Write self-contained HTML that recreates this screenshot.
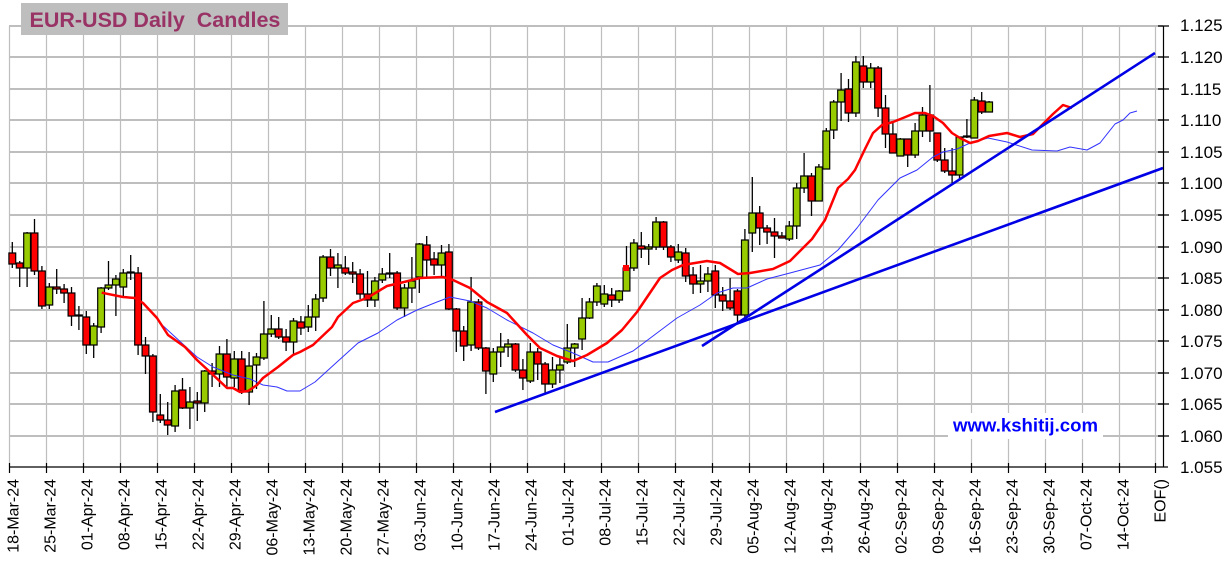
<!DOCTYPE html>
<html><head><meta charset="utf-8"><title>EUR-USD Daily Candles</title>
<style>html,body{margin:0;padding:0;background:#fff;width:1228px;height:576px;overflow:hidden}svg{display:block}text{font-family:"Liberation Sans",Arial,sans-serif}</style>
</head><body>
<svg width="1228" height="576" viewBox="0 0 1228 576" xmlns="http://www.w3.org/2000/svg">
<path fill="none" stroke="#bebebe" stroke-width="1.2" d="M9.5 26V467M46.5 26V467M83.5 26V467M120.5 26V467M157.5 26V467M194.5 26V467M231.5 26V467M268.5 26V467M305.5 26V467M342.5 26V467M379.5 26V467M416.5 26V467M453.5 26V467M490.5 26V467M527.5 26V467M564.5 26V467M601.5 26V467M638.5 26V467M675.5 26V467M712.5 26V467M749.5 26V467M786.5 26V467M823.5 26V467M860.5 26V467M897.5 26V467M934.5 26V467M971.5 26V467M1008.5 26V467M1045.5 26V467M1082.5 26V467M1119.5 26V467M1155.5 26V467"/>
<path fill="none" stroke="#bebebe" stroke-width="2" d="M9 26H1163M9 57H1163M9 89H1163M9 120H1163M9 152H1163M9 183H1163M9 215H1163M9 247H1163M9 278H1163M9 310H1163M9 341H1163M9 373H1163M9 404H1163M9 436H1163"/>
<rect x="948" y="413" width="155" height="26" fill="#fff"/>
<rect x="21" y="3" width="267" height="32" fill="#bebebe"/>
<text x="29.5" y="27" font-size="21.5" font-weight="bold" fill="#993366" xml:space="preserve" style="white-space:pre">EUR-USD Daily  Candles</text>
<path fill="none" stroke="#000" stroke-width="1.3" d="M12.3 242V268M19.7 261V287M27.1 232V287M34.5 219V275M41.9 266V309M49.3 283V309M56.7 269V294M64.1 284V303M71.5 287V326M78.9 306V330M86.3 311V354M93.7 323V358M101.1 287V333M108.5 261V290M115.9 275V316M123.3 269V297M130.7 255V280M138.1 267V355M145.5 337V374M152.9 354V422M160.3 394V423M167.7 402V435M175.1 385V432M182.5 378V409M189.9 387V429M197.3 392V421M204.7 370V412M212.1 363V387M219.5 346V387M226.9 339V388M234.3 351V387M241.7 351V394M249.1 352V405M256.5 353V389M263.9 301V360M271.3 315V337M278.7 317V339M286.1 329V351M293.5 318V355M300.9 316V335M308.3 305V332M315.7 294V331M323.1 255V302M330.5 249V276M337.9 253V288M345.3 256V275M352.7 262V283M360.1 269V299M367.5 271V307M374.9 277V307M382.3 268V283M389.7 253V278M397.1 271V310M404.5 284V317M411.9 257V303M419.3 243V293M426.7 236V277M434.1 252V275M441.5 245V277M448.9 244V310M456.3 308V352M463.7 326V361M471.1 277V351M478.5 299V350M485.9 347V394M493.3 348V382M500.7 333V367M508.1 339V357M515.5 343V372M522.9 359V390M530.3 343V383M537.7 348V380M545.1 362V393M552.5 357V388M559.9 356V383M567.3 324V364M574.7 343V367M582.1 298V350M589.5 298V319M596.9 283V306M604.3 285V307M611.7 288V307M619.1 290V303M626.5 246V291M633.9 239V271M641.3 232V258M648.7 244V265M656.1 217V250M663.5 221V250M670.9 245V262M678.3 244V263M685.7 248V282M693.1 267V294M700.5 265V293M707.9 267V292M715.3 265V308M722.7 287V311M730.1 278V310M737.5 289V323M744.9 229V318M752.3 177V252M759.7 206V245M767.1 225V244M774.5 218V258M781.9 232V238M789.3 221V241M796.7 183V239M804.1 153V193M811.5 173V216M818.9 164V201M826.3 128V169M833.7 100V139M841.1 73V121M848.5 79V122M855.9 56V117M863.3 56V88M870.7 63V88M878.1 66V117M885.5 95V148M892.9 123V153M900.3 138V156M907.7 139V167M915.1 123V158M922.5 107V137M929.9 85V142M937.3 133V162M944.7 148V173M952.1 148V183M959.5 137V180M966.9 119V138M974.3 97V138M981.7 92V114M989.1 101V112"/>
<path fill="#99cc00" stroke="#000" stroke-width="1.2" d="M23.7 233h6.8V268h-6.8zM45.9 287h6.8V305h-6.8zM90.3 326h6.8V345h-6.8zM97.7 288h6.8V327h-6.8zM105.1 285h6.8V288h-6.8zM112.5 279h6.8V285h-6.8zM119.9 273h6.8V287h-6.8zM171.7 391h6.8V426h-6.8zM186.5 402h6.8V408h-6.8zM201.3 371h6.8V403h-6.8zM216.1 354h6.8V374h-6.8zM230.9 359h6.8V378h-6.8zM245.7 366h6.8V392h-6.8zM253.1 357h6.8V365h-6.8zM260.5 334h6.8V358h-6.8zM267.9 329h6.8V334h-6.8zM290.1 321h6.8V342h-6.8zM304.9 317h6.8V327h-6.8zM312.3 299h6.8V317h-6.8zM319.7 257h6.8V298h-6.8zM334.5 265h6.8V268h-6.8zM371.5 281h6.8V300h-6.8zM378.9 274h6.8V280h-6.8zM401.1 288h6.8V308h-6.8zM408.5 281h6.8V288h-6.8zM415.9 244h6.8V277h-6.8zM438.1 253h6.8V265h-6.8zM467.7 302h6.8V345h-6.8zM489.9 352h6.8V374h-6.8zM497.3 347h6.8V352h-6.8zM504.7 344h6.8V347h-6.8zM526.9 352h6.8V381h-6.8zM549.1 370h6.8V384h-6.8zM556.5 365h6.8V370h-6.8zM563.9 348h6.8V362h-6.8zM571.3 344h6.8V348h-6.8zM578.7 318h6.8V339h-6.8zM586.1 302h6.8V318h-6.8zM593.5 286h6.8V302h-6.8zM600.9 294h6.8V304h-6.8zM615.7 291h6.8V300h-6.8zM623.1 268h6.8V291h-6.8zM630.5 243h6.8V268h-6.8zM645.3 247h6.8V249h-6.8zM652.7 222h6.8V247h-6.8zM674.9 252h6.8V260h-6.8zM697.1 281h6.8V284h-6.8zM704.5 274h6.8V281h-6.8zM741.5 240h6.8V315h-6.8zM748.9 213h6.8V233h-6.8zM785.9 226h6.8V239h-6.8zM793.3 188h6.8V226h-6.8zM800.7 176h6.8V188h-6.8zM815.5 167h6.8V201h-6.8zM822.9 131h6.8V169h-6.8zM830.3 102h6.8V130h-6.8zM837.7 90h6.8V102h-6.8zM852.5 62h6.8V113h-6.8zM867.3 68h6.8V82h-6.8zM896.9 139h6.8V156h-6.8zM911.7 131h6.8V155h-6.8zM919.1 115h6.8V131h-6.8zM956.1 137h6.8V175h-6.8zM970.9 100h6.8V138h-6.8zM985.7 102h6.8V112h-6.8z"/>
<path fill="#ff0000" stroke="#000" stroke-width="1.2" d="M8.9 253h6.8V264h-6.8zM16.3 263h6.8V268h-6.8zM31.1 233h6.8V271h-6.8zM38.5 271h6.8V306h-6.8zM53.3 287h6.8V289h-6.8zM60.7 289h6.8V293h-6.8zM68.1 293h6.8V316h-6.8zM75.5 315h6.8V316h-6.8zM82.9 317h6.8V345h-6.8zM127.3 272h6.8V273h-6.8zM134.7 273h6.8V345h-6.8zM142.1 345h6.8V356h-6.8zM149.5 356h6.8V412h-6.8zM156.9 415h6.8V420h-6.8zM164.3 420h6.8V425h-6.8zM179.1 390h6.8V408h-6.8zM193.9 401h6.8V403h-6.8zM208.7 371h6.8V374h-6.8zM223.5 354h6.8V377h-6.8zM238.3 359h6.8V391h-6.8zM275.3 329h6.8V337h-6.8zM282.7 337h6.8V342h-6.8zM297.5 322h6.8V328h-6.8zM327.1 257h6.8V268h-6.8zM341.9 268h6.8V273h-6.8zM349.3 272h6.8V274h-6.8zM356.7 274h6.8V294h-6.8zM364.1 294h6.8V300h-6.8zM386.3 273h6.8V274h-6.8zM393.7 273h6.8V308h-6.8zM423.3 245h6.8V260h-6.8zM430.7 259h6.8V265h-6.8zM445.5 252h6.8V309h-6.8zM452.9 309h6.8V331h-6.8zM460.3 331h6.8V346h-6.8zM475.1 302h6.8V348h-6.8zM482.5 348h6.8V371h-6.8zM512.1 344h6.8V370h-6.8zM519.5 370h6.8V378h-6.8zM534.3 352h6.8V364h-6.8zM541.7 364h6.8V384h-6.8zM608.3 295h6.8V300h-6.8zM637.9 246h6.8V249h-6.8zM660.1 222h6.8V247h-6.8zM667.5 247h6.8V257h-6.8zM682.3 253h6.8V276h-6.8zM689.7 275h6.8V284h-6.8zM711.9 271h6.8V295h-6.8zM719.3 295h6.8V301h-6.8zM726.7 301h6.8V308h-6.8zM734.1 291h6.8V315h-6.8zM756.3 213h6.8V228h-6.8zM763.7 228h6.8V232h-6.8zM771.1 232h6.8V236h-6.8zM778.5 236h6.8V238h-6.8zM808.1 176h6.8V201h-6.8zM845.1 89h6.8V113h-6.8zM859.9 66h6.8V82h-6.8zM874.7 68h6.8V108h-6.8zM882.1 108h6.8V134h-6.8zM889.5 134h6.8V153h-6.8zM904.3 139h6.8V155h-6.8zM926.5 115h6.8V131h-6.8zM933.9 133h6.8V160h-6.8zM941.3 160h6.8V171h-6.8zM948.7 171h6.8V175h-6.8zM963.5 136h6.8V137h-6.8zM978.3 101h6.8V112h-6.8z"/>
<rect x="623" y="265" width="6" height="6" fill="#ff0000"/>
<path fill="none" stroke="#3333ff" stroke-width="1" stroke-linejoin="round" d="M160 323L173 335L197 357L213 367L233 375L250 379L263 385L277 387L287 391L300 391L315 382L337 362L358 343L378 333L397 320L417 310L437 302L450 297L470 301L487 308L507 320L533 333L553 345L573 353L593 362L608 362L633 351L657 333L677 318L700 305L717 293L733 288L747 288L767 279L790 273L820 265L838 250L857 228L878 200L900 178L917 170L933 157L943 152L957 149L970 143L988 138L1007 142L1032 150L1057 151L1070 147L1087 150L1100 143L1115 124L1123 120L1130 113L1137 111"/>
<path fill="none" stroke="#ff0000" stroke-width="2.5" stroke-linejoin="round" d="M101.7 292.7L123 297L135 298L143 303L157 318L168 335L185 347L197 360L210 372L227 388L233 388L240 392L248 391L257 385L263 378L278 367L293 355L300 352L313 345L332 327L338 317L353 303L367 298L387 286L400 283L420 278L443 277L453 280L470 288L487 302L507 313L527 335L540 348L557 356L573 361L587 355L607 343L622 330L637 312L660 278L672 270L683 265L707 261L720 263L738 274L750 273L773 269L790 261L812 239L825 220L838 188L848 179L855 170L865 149L873 133L882 125L893 122L903 118L915 113L925 113L933 116L943 123L952 133L960 138L970 143L978 141L989 136L1007 133L1020 137L1033 134L1047 120L1053 114L1063 105L1072 108"/>
<path fill="none" stroke="#0000e6" stroke-width="2.6" d="M495 412L1163 168M702 346L1155 53"/>
<path fill="none" stroke="#000" stroke-width="1.2" d="M1163.5 26V467M9 467H1168M9.5 463V473M46.5 463V473M83.5 463V473M120.5 463V473M157.5 463V473M194.5 463V473M231.5 463V473M268.5 463V473M305.5 463V473M342.5 463V473M379.5 463V473M416.5 463V473M453.5 463V473M490.5 463V473M527.5 463V473M564.5 463V473M601.5 463V473M638.5 463V473M675.5 463V473M712.5 463V473M749.5 463V473M786.5 463V473M823.5 463V473M860.5 463V473M897.5 463V473M934.5 463V473M971.5 463V473M1008.5 463V473M1045.5 463V473M1082.5 463V473M1119.5 463V473M1155.5 463V473M1158 26H1169M1158 57H1169M1158 89H1169M1158 120H1169M1158 152H1169M1158 183H1169M1158 215H1169M1158 247H1169M1158 278H1169M1158 310H1169M1158 341H1169M1158 373H1169M1158 404H1169M1158 436H1169"/>
<g font-size="17" fill="#000">
<text x="1180" y="31">1.125</text><text x="1180" y="63">1.120</text><text x="1180" y="95">1.115</text><text x="1180" y="126">1.110</text><text x="1180" y="158">1.105</text><text x="1180" y="189">1.100</text><text x="1180" y="221">1.095</text><text x="1180" y="253">1.090</text><text x="1180" y="284">1.085</text><text x="1180" y="316">1.080</text><text x="1180" y="347">1.075</text><text x="1180" y="379">1.070</text><text x="1180" y="410">1.065</text><text x="1180" y="442">1.060</text><text x="1180" y="473">1.055</text>
</g>
<g font-size="16" fill="#000" text-anchor="end">
<text x="18.3" y="479" transform="rotate(-90 18.3 479)">18-Mar-24</text>
<text x="55.3" y="479" transform="rotate(-90 55.3 479)">25-Mar-24</text>
<text x="92.3" y="479" transform="rotate(-90 92.3 479)">01-Apr-24</text>
<text x="129.3" y="479" transform="rotate(-90 129.3 479)">08-Apr-24</text>
<text x="166.3" y="479" transform="rotate(-90 166.3 479)">15-Apr-24</text>
<text x="203.3" y="479" transform="rotate(-90 203.3 479)">22-Apr-24</text>
<text x="240.3" y="479" transform="rotate(-90 240.3 479)">29-Apr-24</text>
<text x="277.3" y="479" transform="rotate(-90 277.3 479)">06-May-24</text>
<text x="314.3" y="479" transform="rotate(-90 314.3 479)">13-May-24</text>
<text x="351.3" y="479" transform="rotate(-90 351.3 479)">20-May-24</text>
<text x="388.3" y="479" transform="rotate(-90 388.3 479)">27-May-24</text>
<text x="425.3" y="479" transform="rotate(-90 425.3 479)">03-Jun-24</text>
<text x="462.3" y="479" transform="rotate(-90 462.3 479)">10-Jun-24</text>
<text x="499.3" y="479" transform="rotate(-90 499.3 479)">17-Jun-24</text>
<text x="536.3" y="479" transform="rotate(-90 536.3 479)">24-Jun-24</text>
<text x="573.3" y="479" transform="rotate(-90 573.3 479)">01-Jul-24</text>
<text x="610.3" y="479" transform="rotate(-90 610.3 479)">08-Jul-24</text>
<text x="647.3" y="479" transform="rotate(-90 647.3 479)">15-Jul-24</text>
<text x="684.3" y="479" transform="rotate(-90 684.3 479)">22-Jul-24</text>
<text x="721.3" y="479" transform="rotate(-90 721.3 479)">29-Jul-24</text>
<text x="758.3" y="479" transform="rotate(-90 758.3 479)">05-Aug-24</text>
<text x="795.3" y="479" transform="rotate(-90 795.3 479)">12-Aug-24</text>
<text x="832.3" y="479" transform="rotate(-90 832.3 479)">19-Aug-24</text>
<text x="869.3" y="479" transform="rotate(-90 869.3 479)">26-Aug-24</text>
<text x="906.3" y="479" transform="rotate(-90 906.3 479)">02-Sep-24</text>
<text x="943.3" y="479" transform="rotate(-90 943.3 479)">09-Sep-24</text>
<text x="980.3" y="479" transform="rotate(-90 980.3 479)">16-Sep-24</text>
<text x="1017.3" y="479" transform="rotate(-90 1017.3 479)">23-Sep-24</text>
<text x="1054.3" y="479" transform="rotate(-90 1054.3 479)">30-Sep-24</text>
<text x="1091.3" y="479" transform="rotate(-90 1091.3 479)">07-Oct-24</text>
<text x="1128.3" y="479" transform="rotate(-90 1128.3 479)">14-Oct-24</text>
<text x="1165.3" y="479" transform="rotate(-90 1165.3 479)">EOF()</text>
</g>
<text x="953" y="431.7" font-size="18.6" font-weight="bold" fill="#0000ff">www.kshitij.com</text>
</svg>
</body></html>
